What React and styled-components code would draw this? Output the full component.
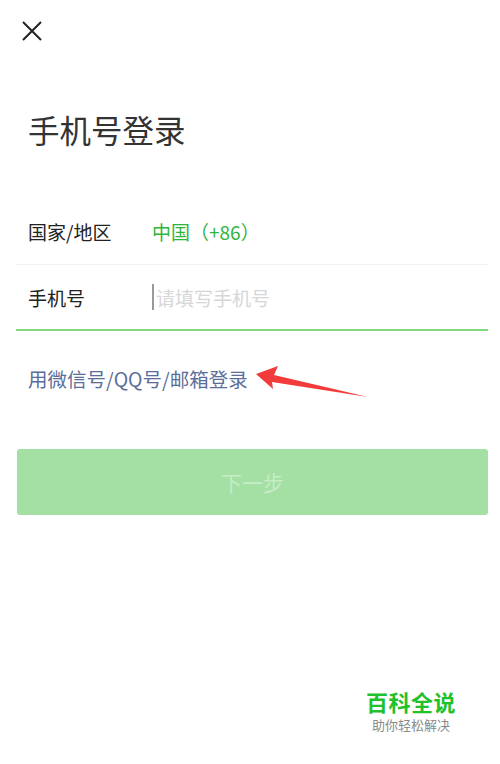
import React from 'react';
import styled, { createGlobalStyle } from 'styled-components';

const GlobalStyle = createGlobalStyle`
  html, body {
    margin: 0;
    padding: 0;
    background: #ffffff;
    font-family: "Noto Sans CJK SC", "Noto Sans", sans-serif;
  }
`;

const Page = styled.div`
  position: relative;
  width: 500px;
  height: 764px;
  overflow: hidden;
  background: #fff;
  box-sizing: border-box;
  padding: 0 12px 0 16px;
`;

const CloseButton = styled.button`
  display: block;
  margin: 19px 0 0 4px;
  padding: 0;
  width: 24px;
  height: 24px;
  border: none;
  background: none;
`;

const Title = styled.h1`
  margin: 64px 0 0 12px;
  font-size: 31.5px;
  line-height: 44px;
  font-weight: 400;
  color: #333;
`;

const Form = styled.div`
  margin-top: 48px;
`;

const Row = styled.div`
  display: flex;
  align-items: center;
  height: 66px;
  padding-left: 12px;
  border-bottom: ${({ $active }) => ($active ? '2px solid #82d982' : '1px solid #f1f1f1')};
  box-sizing: border-box;
  font-size: 19px;
`;

const Label = styled.span`
  width: 124px;
  flex-shrink: 0;
  color: #222;
`;

const Value = styled.span`
  color: #2fb53b;
`;

const Placeholder = styled.span`
  display: flex;
  align-items: center;
  color: #d6d6d6;
`;

const Caret = styled.span`
  width: 2px;
  height: 26px;
  margin-right: 2px;
  background: #999;
`;

const AltLink = styled.a`
  display: block;
  margin: 34px 0 0 12px;
  font-size: 19.5px;
  line-height: 28px;
  color: #5b6e99;
  text-decoration: none;
`;

const NextButton = styled.button`
  display: block;
  width: 471px;
  height: 66px;
  margin: 56px 0 0 1px;
  border: none;
  border-radius: 3px;
  background: #a4e0a4;
  color: #c6edc6;
  font-family: inherit;
  font-size: 21px;
`;

const Arrow = styled.svg`
  position: absolute;
  left: 0;
  top: 0;
  pointer-events: none;
`;

const Watermark = styled.div`
  position: absolute;
  left: 366px;
  top: 688px;
  display: flex;
  flex-direction: column;
  align-items: center;
`;

const MarkTitle = styled.span`
  font-size: 22px;
  line-height: 26px;
  font-weight: 700;
  color: #1fc12c;
  letter-spacing: 0.5px;
`;

const MarkSub = styled.span`
  margin-top: 4px;
  font-size: 13px;
  line-height: 14px;
  color: #8a8a8a;
`;

export default function App() {
  return (
    <>
      <GlobalStyle />
      <Page>
        <CloseButton aria-label="关闭">
          <svg width="24" height="24" viewBox="0 0 24 24">
            <path d="M3 3 L21 21 M21 3 L3 21" stroke="#222" strokeWidth="2" fill="none" />
          </svg>
        </CloseButton>
        <Title>手机号登录</Title>
        <Form>
          <Row>
            <Label>国家/地区</Label>
            <Value>中国（+86）</Value>
          </Row>
          <Row $active>
            <Label>手机号</Label>
            <Placeholder>
              <Caret />
              请填写手机号
            </Placeholder>
          </Row>
        </Form>
        <AltLink>用微信号/QQ号/邮箱登录</AltLink>
        <NextButton>下一步</NextButton>
        <Arrow width="500" height="764">
          <polygon points="256,374 278,366 274,375 368,397 272,382 273,389" fill="#f23b3b" />
        </Arrow>
        <Watermark>
          <MarkTitle>百科全说</MarkTitle>
          <MarkSub>助你轻松解决</MarkSub>
        </Watermark>
      </Page>
    </>
  );
}
